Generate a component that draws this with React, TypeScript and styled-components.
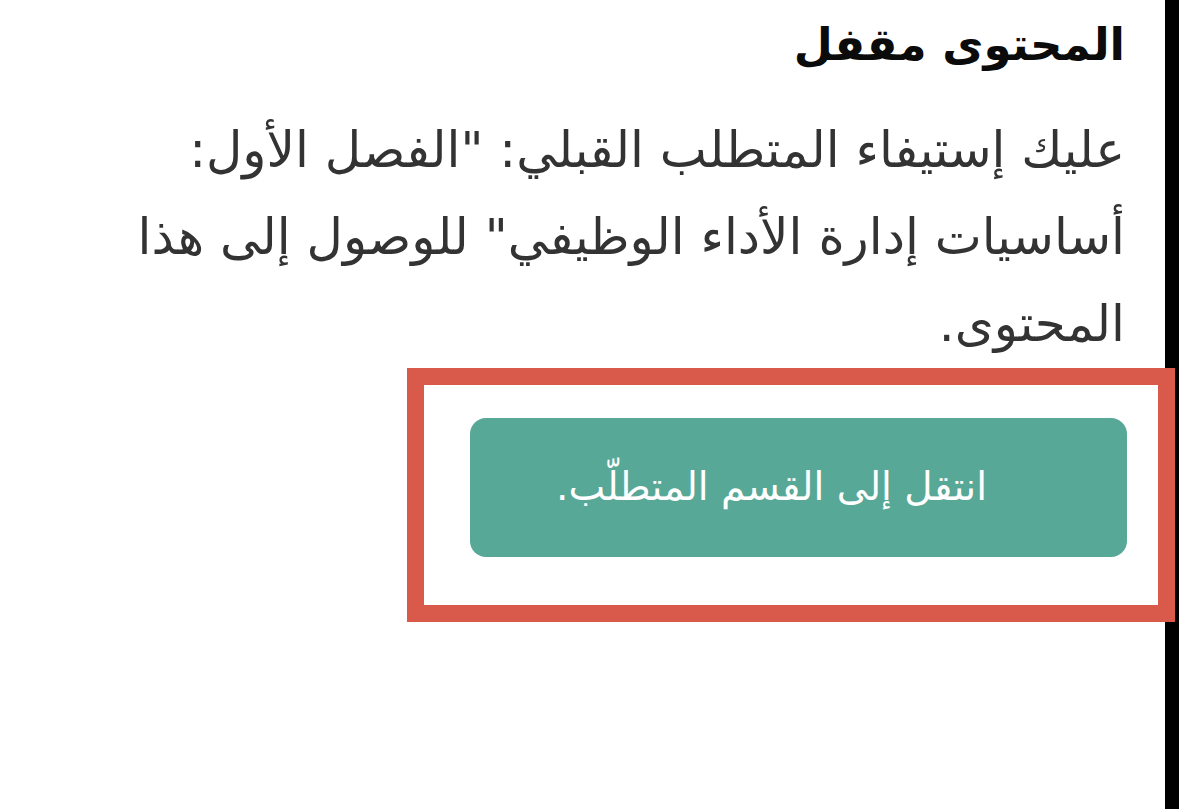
import React from 'react';
import styled, { createGlobalStyle } from 'styled-components';

const GlobalStyle = createGlobalStyle`
  html, body {
    margin: 0;
    padding: 0;
    background: #ffffff;
  }
  body {
    font-family: "DejaVu Sans", "Noto Sans", sans-serif;
  }
`;

const Screen = styled.div`
  display: flex;
  flex-direction: row;
  width: 1179px;
  height: 809px;
  overflow: hidden;
  direction: ltr;
`;

const Panel = styled.div`
  flex: 1;
  direction: rtl;
  padding: 13px 40px 0 0;
  box-sizing: border-box;
`;

const Edge = styled.div`
  width: 14px;
  background: #000000;
`;

const Title = styled.h2`
  margin: 0;
  font-size: 45px;
  font-weight: 700;
  color: #0b0b0b;
  line-height: 64px;
`;

const Message = styled.p`
  margin: 30px 0 0 0;
  font-size: 50px;
  line-height: 87px;
  color: #333333;
  text-align: right;
  white-space: nowrap;
`;

const Highlight = styled.div`
  position: relative;
  z-index: 2;
  box-sizing: border-box;
  width: 768px;
  margin: 0 -50px 0 0;
  border: 17px solid #d9594a;
  padding: 33px 31px 48px 46px;
  background: #ffffff;
`;

const ActionButton = styled.button`
  display: flex;
  align-items: center;
  justify-content: center;
  box-sizing: border-box;
  width: 100%;
  height: 139px;
  padding: 0 54px 2px 0;
  border: none;
  border-radius: 16px;
  background: #58a897;
  color: #ffffff;
  font-family: inherit;
  font-size: 39px;
  direction: rtl;
`;

export default function App() {
  return (
    <>
      <GlobalStyle />
      <Screen>
        <Panel>
          <Title>المحتوى مقفل</Title>
          <Message>
            عليك إستيفاء المتطلب القبلي: "الفصل الأول:
            <br />
            أساسيات إدارة الأداء الوظيفي" للوصول إلى هذا
            <br />
            المحتوى.
          </Message>
          <Highlight>
            <ActionButton>انتقل إلى القسم المتطلّب.</ActionButton>
          </Highlight>
        </Panel>
        <Edge />
      </Screen>
    </>
  );
}
